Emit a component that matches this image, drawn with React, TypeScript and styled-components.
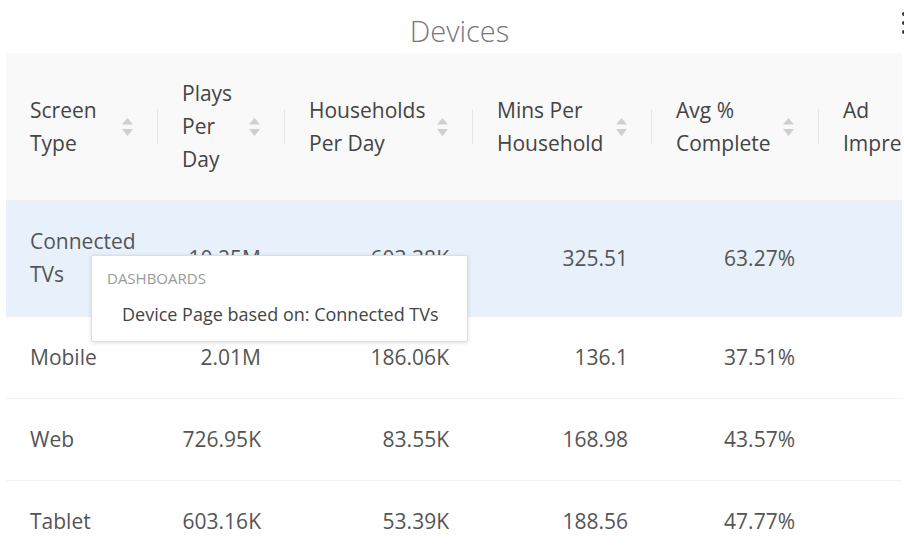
import React from "react";
import styled, { createGlobalStyle } from "styled-components";

const Global = createGlobalStyle`
  html, body { margin: 0; padding: 0; background: #fff; }
  body { font-family: "Open Sans", "Liberation Sans", sans-serif; }
`;

const Page = styled.div`
  position: relative;
  width: 904px;
  height: 550px;
  overflow: hidden;
  background: #fff;
`;

const TitleBar = styled.div`
  height: 53px;
  box-sizing: border-box;
  padding: 8px 0 0 15px;
  display: flex;
  align-items: center;
  justify-content: center;
`;

const Title = styled.h2`
  margin: 0;
  font-size: 29px;
  font-weight: 300;
  color: #777;
  line-height: 1;
`;

const MenuDots = styled.div`
  position: absolute;
  top: 12px;
  right: -2px;
  display: flex;
  flex-direction: column;
  gap: 5px;
`;

const Dot = styled.span`
  width: 4px;
  height: 4px;
  border-radius: 50%;
  background: #333;
`;

const TableWrap = styled.div`
  margin-left: 6px;
  width: 896px;
  overflow: hidden;
`;

const Table = styled.table`
  border-collapse: collapse;
  table-layout: fixed;
  width: 993px;
  font-size: 21px;
  line-height: 33px;
`;

const HeadRow = styled.tr`
  background: #f9f9f9;
  border-bottom: 1px solid #eeeeee;
`;

const Th = styled.th<{ $last?: boolean }>`
  position: relative;
  padding: 24px 25px 24px 24px;
  text-align: left;
  font-weight: 400;
  color: #444;
  vertical-align: middle;
  &::after {
    content: "";
    display: ${(p) => (p.$last ? "none" : "block")};
    position: absolute;
    right: 0;
    top: 50%;
    margin-top: -18px;
    height: 35px;
    width: 1px;
    background: #e6e6e6;
  }
`;

const HeadInner = styled.div`
  display: flex;
  align-items: center;
  gap: 8px;
`;

const HeadLabel = styled.span`
  flex: 1;
  min-width: 0;
`;

const SortIcon = styled.svg`
  flex: none;
  width: 11px;
  height: 18px;
`;

const Row = styled.tr<{ $active?: boolean }>`
  background: ${(p) => (p.$active ? "#e8f1fb" : "#fff")};
  border-bottom: 1px solid #f0f0f0;
`;

const Td = styled.td<{ $num?: boolean; $tall?: boolean }>`
  padding: ${(p) => (p.$tall ? "24px 24px 25px" : "24px 24px 24px")};
  text-align: ${(p) => (p.$num ? "right" : "left")};
  color: #555;
  vertical-align: middle;
  white-space: ${(p) => (p.$num ? "nowrap" : "normal")};
`;

const Popup = styled.div`
  position: absolute;
  left: 91px;
  top: 255px;
  width: 377px;
  height: 87px;
  box-sizing: border-box;
  background: #fff;
  border: 1px solid #dedede;
  border-radius: 2px;
  box-shadow: 0 1px 4px rgba(0, 0, 0, 0.12);
`;

const PopupLabel = styled.div`
  padding: 12px 15px 0;
  font-size: 15px;
  line-height: 20px;
  color: #9a9a9a;
  text-transform: uppercase;
`;

const PopupItem = styled.div`
  padding: 14px 30px 0;
  font-size: 18px;
  line-height: 24px;
  color: #444;
  white-space: nowrap;
`;

const Sort = () => (
  <SortIcon viewBox="0 0 11 18">
    <path d="M5.5 0 L11 6.5 L0 6.5 Z" fill="#cfcfcf" />
    <path d="M0 11 L11 11 L5.5 18 Z" fill="#cfcfcf" />
  </SortIcon>
);

const columns = [
  { label: "Screen Type", width: 152 },
  { label: "Plays Per Day", width: 127 },
  { label: "Households Per Day", width: 188 },
  { label: "Mins Per Household", width: 179 },
  { label: "Avg % Complete", width: 167 },
  { label: "Ad Impressions", width: 180 },
];

const rows = [
  { name: "Connected TVs", plays: "10.25M", hh: "603.38K", mins: "325.51", avg: "63.27%", ad: "", active: true },
  { name: "Mobile", plays: "2.01M", hh: "186.06K", mins: "136.1", avg: "37.51%", ad: "" },
  { name: "Web", plays: "726.95K", hh: "83.55K", mins: "168.98", avg: "43.57%", ad: "" },
  { name: "Tablet", plays: "603.16K", hh: "53.39K", mins: "188.56", avg: "47.77%", ad: "" },
];

export default function App() {
  return (
    <Page>
      <Global />
      <TitleBar>
        <Title>Devices</Title>
      </TitleBar>
      <MenuDots>
        <Dot />
        <Dot />
        <Dot />
      </MenuDots>
      <TableWrap>
        <Table>
          <colgroup>
            {columns.map((c) => (
              <col key={c.label} style={{ width: c.width }} />
            ))}
          </colgroup>
          <thead>
            <HeadRow>
              {columns.map((c, i) => (
                <Th key={c.label} $last={i === columns.length - 1}>
                  <HeadInner>
                    <HeadLabel>{c.label}</HeadLabel>
                    {i < columns.length - 1 && <Sort />}
                  </HeadInner>
                </Th>
              ))}
            </HeadRow>
          </thead>
          <tbody>
            {rows.map((r) => (
              <Row key={r.name} $active={r.active}>
                <Td $tall={r.active}>{r.name}</Td>
                <Td $num>{r.plays}</Td>
                <Td $num>{r.hh}</Td>
                <Td $num>{r.mins}</Td>
                <Td $num>{r.avg}</Td>
                <Td $num>{r.ad}</Td>
              </Row>
            ))}
          </tbody>
        </Table>
      </TableWrap>
      <Popup>
        <PopupLabel>Dashboards</PopupLabel>
        <PopupItem>Device Page based on: Connected TVs</PopupItem>
      </Popup>
    </Page>
  );
}
